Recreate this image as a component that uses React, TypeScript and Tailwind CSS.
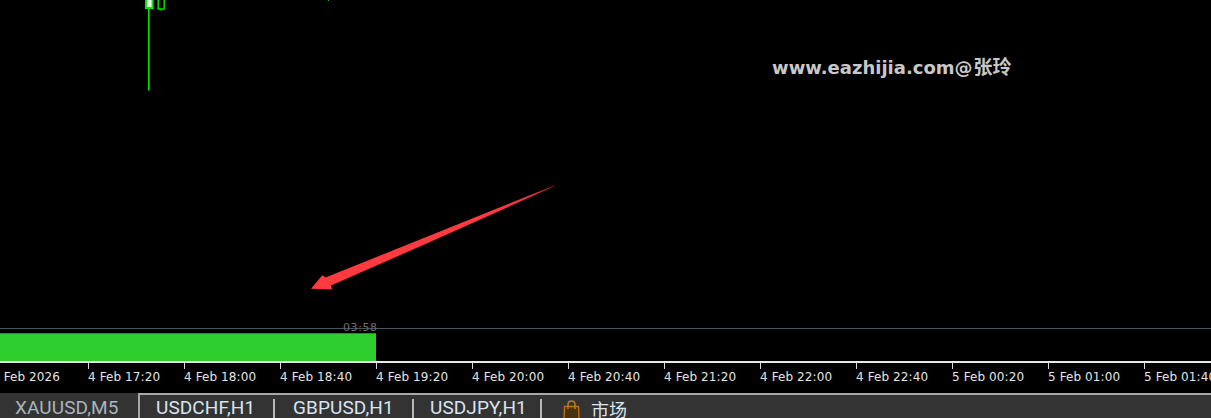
const axisLabels = [
  "4 Feb 2026",
  "4 Feb 17:20",
  "4 Feb 18:00",
  "4 Feb 18:40",
  "4 Feb 19:20",
  "4 Feb 20:00",
  "4 Feb 20:40",
  "4 Feb 21:20",
  "4 Feb 22:00",
  "4 Feb 22:40",
  "5 Feb 00:20",
  "5 Feb 01:00",
  "5 Feb 01:40",
];

const tabs = [
  { label: "USDCHF,H1", width: "w-[135px]", pad: "pl-[16px]" },
  { label: "GBPUSD,H1", width: "w-[139px]", pad: "pl-[18px]" },
  { label: "USDJPY,H1", width: "w-[128px]", pad: "pl-[16px]" },
];

function Candles() {
  return (
    <svg className="absolute left-0 top-0" width="340" height="100" fill="none">
      <rect x="146" y="-4" width="6.500" height="12" fill="#fff" stroke="#00f000" strokeWidth="2" />
      <path d="M148.800 8V90.500" stroke="#00e000" strokeWidth="1.700" />
      <rect x="158.200" y="-4" width="6" height="13" stroke="#00e000" strokeWidth="1.500" />
      <path d="M161 9V11" stroke="#00e000" />
      <path d="M328.500 0V1" stroke="#00c000" />
    </svg>
  );
}

function Arrow() {
  return (
    <svg className="absolute left-[300px] top-[180px]" width="260" height="115">
      <defs>
        <linearGradient id="tail" x1="100%" y1="0%" x2="75%" y2="25%">
          <stop offset="0%" stopColor="#7a161c" />
          <stop offset="35%" stopColor="#e0343c" />
          <stop offset="100%" stopColor="#ff3b3f" />
        </linearGradient>
      </defs>
      <path
        d="M255 5.500L254 6.500L130 62L31 105.500L32 109.500L11 108.700L22.300 95.300L25.500 97.500L130 55.500L254 5.500Z"
        fill="url(#tail)"
      />
    </svg>
  );
}

function BagIcon() {
  return (
    <svg width="17" height="20" viewBox="0 0 17 20" fill="none">
      <path d="M1.500 6.500H15.500L16 19H1Z" fill="#4a3210" stroke="#b8700f" strokeWidth="1.400" />
      <path d="M5 9V4.500C5 2.500 6.500 1 8.500 1S12 2.500 12 4.500V9" stroke="#c47a12" strokeWidth="1.500" />
    </svg>
  );
}

export default function App() {
  return (
    <div className="flex h-[418px] w-[1211px] flex-col overflow-hidden bg-black font-['Roboto',sans-serif]">
      <div className="relative h-[361px] shrink-0">
        <Candles />
        <div className="absolute left-[772px] top-[55px] whitespace-nowrap font-['DejaVu_Sans','Noto_Sans_CJK_SC',sans-serif] text-[18px] font-bold leading-6 text-[#c8c8c8]">
          www.eazhijia.com@<span className="ml-[1px] text-[19px]">张玲</span>
        </div>
        <Arrow />
        <div className="absolute left-0 right-0 top-[328px] h-px bg-[#4a5260]" />
        <div className="absolute bottom-0 left-0 h-[28px] w-[376px] border-t border-[#00a800] bg-[#2ece2e]" />
        <div className="absolute left-[343px] top-[321px] font-['DejaVu_Sans',sans-serif] text-[11px] leading-[13px] tracking-[0.6px] text-[#6e6e6e]">
          03:58
        </div>
      </div>

      <div className="h-[32px] shrink-0 border-t-2 border-[#e8e8e8]">
        <div className="-ml-[8px] flex">
          {axisLabels.map((label) => (
            <div key={label} className="w-[96px] shrink-0">
              <div className="h-[6px] w-px bg-[#d8d8d8]" />
              <div className="whitespace-nowrap font-['DejaVu_Sans',sans-serif] text-[12px] leading-[16px] tracking-[0.1px] text-[#e4e4e4]">
                {label}
              </div>
            </div>
          ))}
        </div>
      </div>

      <div className="flex flex-1 bg-[#333333] text-[19px] leading-[24px] tracking-[0.1px] text-[#d8e4f0]">
        <div className="w-[138px] shrink-0 pl-[15px] pt-[3px] text-[#a9b4be]">XAUUSD,M5</div>
        <div className="flex flex-1 border-l-2 border-t-2 border-[#a8a8a8]">
          {tabs.map((tab) => (
            <div key={tab.label} className={`${tab.width} ${tab.pad} shrink-0 pt-[1px]`}>
              <div className="relative h-full whitespace-nowrap">
                {tab.label}
                <div className="absolute right-0 top-[3px] h-[22px] w-0.5 bg-[#b8b8b8]" />
              </div>
            </div>
          ))}
          <div className="flex gap-[11px] pl-[21px] pt-[2px]">
            <div className="pt-[3px]">
              <BagIcon />
            </div>
            <span className="font-['Noto_Sans_CJK_SC',sans-serif] text-[18px]">市场</span>
          </div>
        </div>
      </div>
    </div>
  );
}
